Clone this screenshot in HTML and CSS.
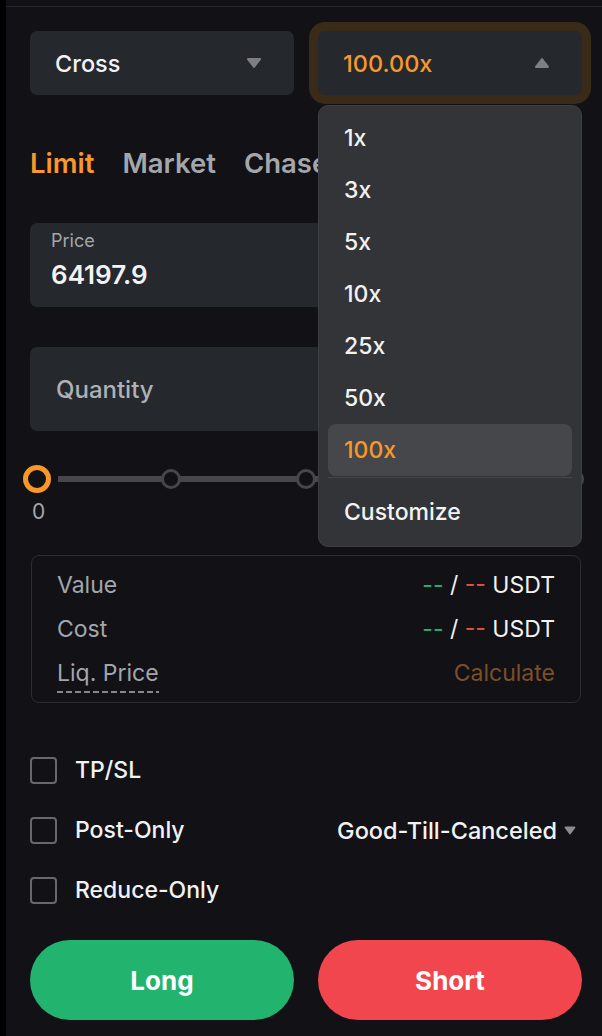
FILE: index.html
```html
<!DOCTYPE html>
<html lang="en">

<head>
    <meta charset="UTF-8">
    <meta name="viewport" content="width=device-width, initial-scale=1.0">
    <title>Order Form</title>
    <link rel="stylesheet" href="styles.css">
</head>

<body>
    <div class="app">
        <div class="edge"></div>
        <div class="panel">
            <div class="top-rule"></div>

            <div class="selects">
                <div class="select">
                    <span>Cross</span>
                    <svg class="caret" width="16" height="12" viewBox="0 0 16 12"><path d="M2 1h12c.9 0 1.4 1 .8 1.7l-6 7.8c-.4.5-1.2.5-1.6 0l-6-7.8C.6 2 1.1 1 2 1z" fill="#7d7f84"/></svg>
                </div>
                <div class="lev-wrap">
                    <div class="select select-open">
                        <span class="orange">100.00x</span>
                        <svg class="caret" width="16" height="12" viewBox="0 0 16 12"><path d="M2 11h12c.9 0 1.4-1 .8-1.7l-6-7.8c-.4-.5-1.2-.5-1.6 0l-6 7.8C.6 10 1.1 11 2 11z" fill="#7d7f84"/></svg>
                    </div>
                    <div class="menu">
                        <div class="menu-item">1x</div>
                        <div class="menu-item">3x</div>
                        <div class="menu-item">5x</div>
                        <div class="menu-item">10x</div>
                        <div class="menu-item">25x</div>
                        <div class="menu-item">50x</div>
                        <div class="menu-item active">100x</div>
                        <div class="menu-sep"></div>
                        <div class="menu-item custom">Customize</div>
                    </div>
                </div>
            </div>

            <div class="tabs">
                <span class="tab orange">Limit</span>
                <span class="tab">Market</span>
                <span class="tab">Chase</span>
            </div>

            <div class="field price">
                <div class="field-label">Price</div>
                <div class="field-value">64197.9</div>
            </div>

            <div class="field qty">
                <div class="field-placeholder">Quantity</div>
            </div>

            <div class="slider">
                <span class="node thumb"></span>
                <span class="node"></span>
                <span class="node"></span>
                <span class="node"></span>
                <span class="node"></span>
            </div>
            <div class="slider-label">0</div>

            <div class="info">
                <div class="info-row">
                    <span class="muted">Value</span>
                    <span><span class="green">--</span> / <span class="red">--</span> USDT</span>
                </div>
                <div class="info-row">
                    <span class="muted">Cost</span>
                    <span><span class="green">--</span> / <span class="red">--</span> USDT</span>
                </div>
                <div class="info-row">
                    <span class="muted dashed">Liq. Price</span>
                    <span class="calc">Calculate</span>
                </div>
            </div>

            <div class="checks">
                <div class="check-row">
                    <label class="check"><span class="box"></span>TP/SL</label>
                </div>
                <div class="check-row">
                    <label class="check"><span class="box"></span>Post-Only</label>
                    <span class="tif">Good-Till-Canceled
                        <svg width="12" height="9" viewBox="0 0 12 9"><path d="M1.5 .5h9c.8 0 1.2.9.7 1.5l-4.5 6c-.4.5-1 .5-1.4 0L.8 2C.3 1.4.7.5 1.5.5z" fill="#8a8c91"/></svg>
                    </span>
                </div>
                <div class="check-row">
                    <label class="check"><span class="box"></span>Reduce-Only</label>
                </div>
            </div>

            <div class="actions">
                <button class="btn long">Long</button>
                <button class="btn short">Short</button>
            </div>
        </div>
    </div>
</body>

</html>
```

FILE: styles.css
```css
body {
    margin: 0;
    background: #000;
    font-family: Inter, "Noto Sans", sans-serif;
    color: #f2f2f3;
}

.app {
    display: flex;
    height: 1036px;
    overflow: hidden;
}

.edge {
    width: 6px;
    background: #000;
}

.panel {
    flex: 1;
    background: #111116;
    padding: 6px 20px 0 24px;
}

.top-rule {
    height: 1px;
    background: #27282d;
    margin: 0 -20px 0 -24px;
}

.orange {
    color: #f8982a;
}

/* selects */
.selects {
    display: grid;
    grid-template-columns: 1fr 1fr;
    gap: 24px;
    margin-top: 24px;
}

.lev-wrap {
    position: relative;
}

.select {
    height: 64px;
    background: #25282d;
    border-radius: 7px;
    display: flex;
    align-items: center;
    justify-content: space-between;
    padding: 0 32px 0 25px;
    font-size: 23.5px;
    font-weight: 500;
    box-sizing: border-box;
}

.select-open {
    box-shadow: 0 0 0 9px #3a2a18;
}

.menu {
    position: absolute;
    top: 74px;
    left: 0;
    right: 0;
    z-index: 5;
    background: #333437;
    border: 1px solid #3e3f44;
    border-radius: 10px;
    padding: 6px 9px 0;
}

.menu-item {
    height: 52px;
    display: flex;
    align-items: center;
    padding-left: 16px;
    font-size: 23px;
    font-weight: 500;
    border-radius: 8px;
}

.menu-item.active {
    background: #46474b;
    color: #f8982a;
}

.menu-sep {
    height: 1px;
    background: #46474b;
    margin-top: 1px;
}

.menu-item.custom {
    height: 68px;
}

/* tabs */
.tabs {
    display: flex;
    gap: 28px;
    margin-top: 48px;
    height: 40px;
    align-items: center;
}

.tab {
    font-size: 27.5px;
    font-weight: 600;
    color: #a3a6ab;
}

.tab.orange {
    color: #f8982a;
}

/* inputs */
.field {
    height: 84px;
    background: #25282d;
    border-radius: 7px;
    box-sizing: border-box;
}

.price {
    margin-top: 40px;
    padding: 7px 22px 0 21px;
}

.field-label {
    font-size: 18px;
    color: #a3a6ab;
}

.field-value {
    font-size: 26px;
    font-weight: 600;
    margin-top: 8px;
}

.qty {
    margin-top: 40px;
    display: flex;
    align-items: center;
    padding-left: 26px;
}

.field-placeholder {
    font-size: 24px;
    font-weight: 500;
    color: #aeb1b6;
}

/* slider */
.slider {
    position: relative;
    display: flex;
    justify-content: space-between;
    align-items: center;
    margin: 38px -2px 0 -3px;
    height: 20px;
}

.slider::before {
    content: "";
    position: absolute;
    left: 31px;
    right: 10px;
    top: 7px;
    height: 6px;
    background: #46474c;
}

.node {
    position: relative;
    width: 20px;
    height: 20px;
    box-sizing: border-box;
    border: 3px solid #46474c;
    border-radius: 50%;
    background: #111116;
}

.node.thumb {
    width: 28px;
    height: 28px;
    margin: -4px;
    border: 5px solid #f8982a;
}

.slider-label {
    font-size: 21px;
    color: #a3a6ab;
    padding-left: 2px;
    margin-top: 10px;
    line-height: 26px;
}

/* info box */
.info {
    margin: 30px 1px 0;
    border: 1px solid #2c2e33;
    border-radius: 8px;
    padding: 7px 25px;
}

.info-row {
    height: 44px;
    display: flex;
    align-items: center;
    justify-content: space-between;
    font-size: 23px;
}

.muted {
    color: #a3a6ab;
}

.dashed {
    padding-bottom: 6px;
    margin-top: 6px;
    background: repeating-linear-gradient(90deg, #85878c 0 6px, transparent 6px 9px) left bottom / 100% 2px no-repeat;
}

.green {
    color: #22b36f;
}

.red {
    color: #e4533d;
}

.calc {
    color: #7b4f28;
}

/* checkboxes */
.checks {
    margin-top: 37px;
}

.check-row {
    height: 60px;
    display: flex;
    align-items: center;
    justify-content: space-between;
}

.check {
    display: flex;
    align-items: center;
    gap: 18px;
    font-size: 23px;
    font-weight: 500;
}

.box {
    width: 27px;
    height: 27px;
    box-sizing: border-box;
    border: 2px solid #66686d;
    border-radius: 4px;
}

.tif {
    display: flex;
    align-items: center;
    gap: 7px;
    font-size: 23.5px;
    font-weight: 500;
    margin-right: 6px;
}

/* buttons */
.actions {
    display: flex;
    gap: 24px;
    margin-top: 20px;
}

.btn {
    flex: 1;
    height: 80px;
    border: none;
    border-radius: 40px;
    color: #fff;
    font-family: Inter, sans-serif;
    font-size: 26px;
    font-weight: 700;
}

.long {
    background: #22b36f;
}

.short {
    background: #f2464e;
}
```
